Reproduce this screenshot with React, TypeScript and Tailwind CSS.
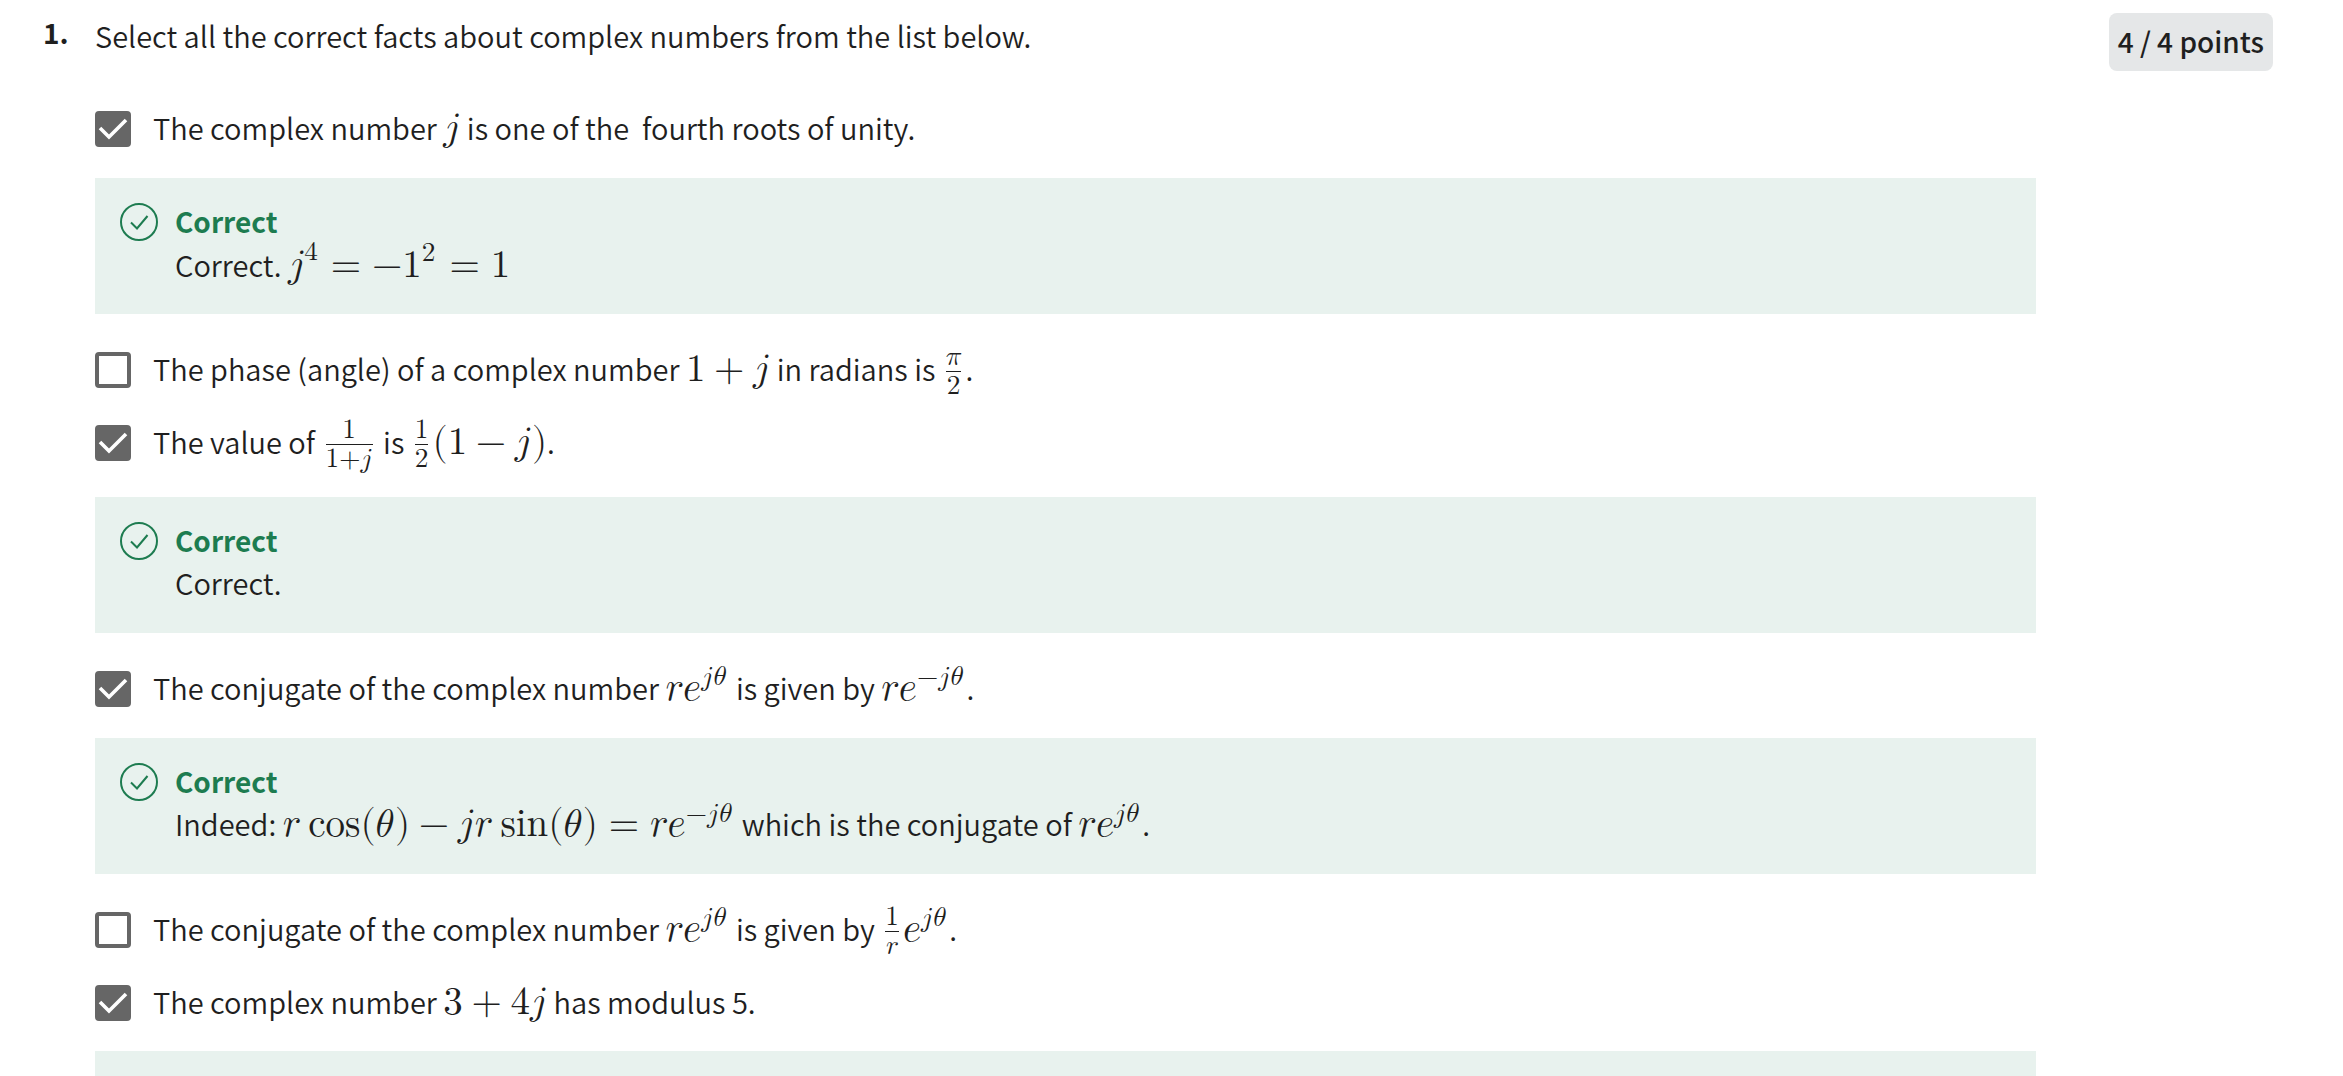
import type { ReactNode } from "react";

declare module "react" {
  namespace JSX {
    interface IntrinsicElements {
      math: any;
      mi: any;
      mn: any;
      mo: any;
      mrow: any;
      msup: any;
      mfrac: any;
    }
  }
}

function Formula({ children }: { children: ReactNode }) {
  return (
    <math className="text-[39px] leading-none [font-family:'Latin_Modern_Math','Liberation_Serif',serif]">
      {children}
    </math>
  );
}

function J() {
  return <mi className="mr-px">j</mi>;
}

function Fraction({ top, bottom }: { top: ReactNode; bottom: ReactNode }) {
  return (
    <mfrac className="mx-1">
      {top}
      {bottom}
    </mfrac>
  );
}

function Theta() {
  return (
    <mrow>
      <mo stretchy="false">(</mo>
      <mi className="mr-px">θ</mi>
      <mo stretchy="false">)</mo>
    </mrow>
  );
}

function Exponential({ sign = "" }: { sign?: string }) {
  return (
    <msup className="mr-px">
      <mi>e</mi>
      <mrow>
        {sign && <mo>{sign}</mo>}
        <mi className="mr-px">j</mi>
        <mi>θ</mi>
      </mrow>
    </msup>
  );
}

function Polar({ sign = "" }: { sign?: string }) {
  return (
    <mrow>
      <mi>r</mi>
      <Exponential sign={sign} />
    </mrow>
  );
}

function Choice({ id, checked = false, children }: { id: string; checked?: boolean; children: ReactNode }) {
  return (
    <div className="flex h-[73px] items-center gap-[22px]">
      <span className="relative flex size-9 shrink-0">
        <input
          id={id}
          type="checkbox"
          defaultChecked={checked}
          className="peer size-9 appearance-none rounded-sm border-4 border-[#666] bg-white checked:bg-[#666]"
        />
        <svg
          viewBox="0 0 36 36"
          aria-hidden="true"
          className="pointer-events-none absolute inset-0 hidden size-9 fill-none stroke-white stroke-[3.6] peer-checked:block"
        >
          <path d="M5 17 L14 26 L31 9" />
        </svg>
      </span>
      <label htmlFor={id} className="h-12 whitespace-pre leading-[44px]">
        {children}
      </label>
    </div>
  );
}

function Feedback({ tall = false, children }: { tall?: boolean; children?: ReactNode }) {
  return (
    <div
      className={`${tall ? "mt-[18px]" : "mt-[13px]"} mb-[19px] flex h-[136px] gap-[17px] bg-[#e8f2ee] px-[25px] pt-[25px]`}
    >
      <svg
        viewBox="0 0 38 38"
        aria-hidden="true"
        className="size-[38px] shrink-0 fill-none stroke-[#1d7c50] stroke-2"
      >
        <circle cx="19" cy="19" r="18" />
        <path d="M11 19.500 L17 25.500 L27.500 13" />
      </svg>
      <div className="-mt-1 leading-[44px]">
        <div className="h-[42px] text-[28px] font-bold text-[#1d7c50]">Correct</div>
        <div className="h-11 whitespace-pre">{children}</div>
      </div>
    </div>
  );
}

export default function App() {
  return (
    <main className="flex min-h-screen items-start overflow-hidden bg-white pr-[70px] pl-[43px] text-[29px] font-[350] text-[#1f1f1f] [font-family:'Noto_Sans_CJK_SC','Open_Sans',sans-serif]">
      <div className="w-[52px] shrink-0 pt-[10px] text-[28px] leading-[44px] font-bold">1.</div>
      <form className="min-w-0 flex-1 pt-[13px]">
        <fieldset>
          <legend className="h-[79px] leading-[44px]">Select all the correct facts about complex numbers from the list below.</legend>
          <Choice id="fourth-root" checked>
            The complex number <Formula><J /></Formula> is one of the  fourth roots of unity.
          </Choice>
          <Feedback>
            Correct. <Formula>
              <msup><mi>j</mi><mn>4</mn></msup>
              <mo>=</mo>
              <mo form="prefix">−</mo>
              <msup className="mr-px"><mn>1</mn><mn>2</mn></msup>
              <mo>=</mo>
              <mn>1</mn>
            </Formula>
          </Feedback>
          <Choice id="phase">
            The phase (angle) of a complex number <Formula><mn>1</mn><mo>+</mo><J /></Formula> in radians is <Formula><Fraction top={<mi>π</mi>} bottom={<mn>2</mn>} /></Formula>.
          </Choice>
          <Choice id="reciprocal" checked>
            The value of <Formula>
              <Fraction
                top={<mn>1</mn>}
                bottom={<mrow><mn>1</mn><mo lspace="0" rspace="0">+</mo><J /></mrow>}
              />
            </Formula> is <Formula>
              <Fraction top={<mn>1</mn>} bottom={<mn>2</mn>} />
              <mo stretchy="false">(</mo><mn>1</mn><mo>−</mo><J /><mo stretchy="false">)</mo>
            </Formula>.
          </Choice>
          <Feedback tall>Correct.</Feedback>
          <Choice id="conjugate" checked>
            The conjugate of the complex number <Formula><Polar /></Formula> is given by <Formula><Polar sign="−" /></Formula>.
          </Choice>
          <Feedback>
            Indeed: <Formula>
              <mi>r</mi><mi className="ml-2">cos</mi><Theta />
              <mo>−</mo>
              <J /><mi>r</mi><mi className="ml-2">sin</mi><Theta />
              <mo>=</mo>
              <Polar sign="−" />
            </Formula> which is the conjugate of <Formula><Polar /></Formula>.
          </Feedback>
          <Choice id="inverse">
            The conjugate of the complex number <Formula><Polar /></Formula> is given by <Formula><Fraction top={<mn>1</mn>} bottom={<mi>r</mi>} /><Exponential /></Formula>.
          </Choice>
          <Choice id="modulus" checked>
            The complex number <Formula><mn>3</mn><mo>+</mo><mn>4</mn><J /></Formula> has modulus 5.
          </Choice>
          <div className="mt-3 h-[26px] bg-[#e8f2ee]" />
        </fieldset>
      </form>
      <div className="mt-[13px] ml-[73px] h-[58px] shrink-0 rounded-lg bg-[#e5e7e8] px-[9px] text-[28px] leading-[56px] font-medium">
        4 / 4 points
      </div>
    </main>
  );
}
